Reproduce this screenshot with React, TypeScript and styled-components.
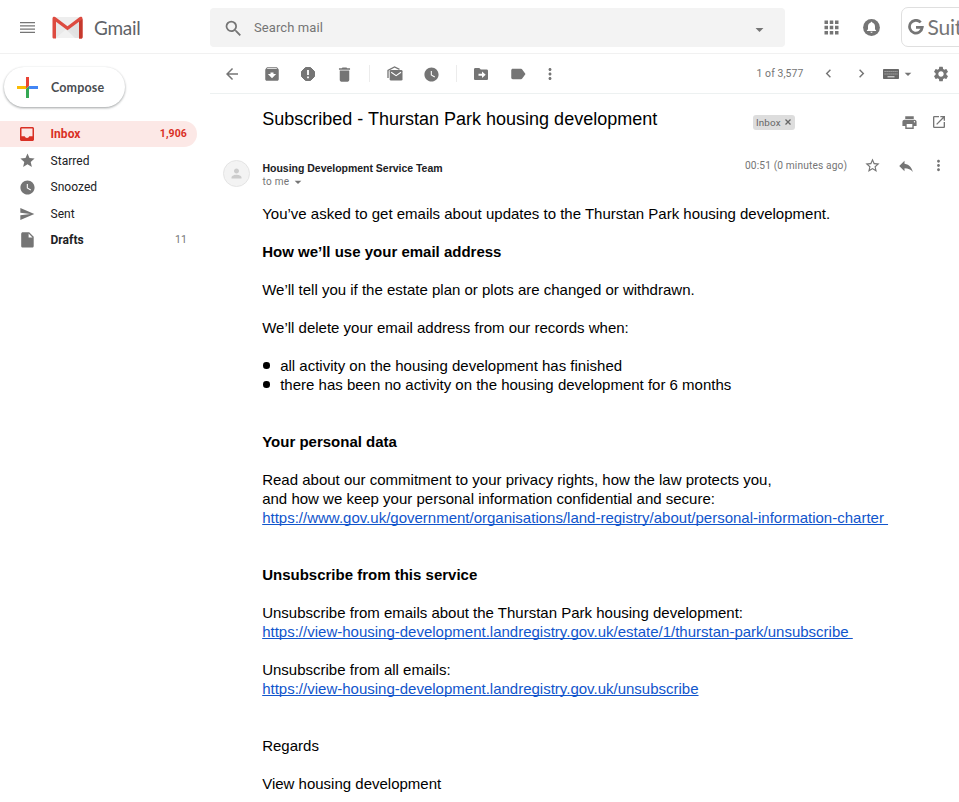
import React from 'react';
import styled, { createGlobalStyle } from 'styled-components';
import {
  MdArrowBack, MdArchive, MdDelete, MdWatchLater, MdLabel, MdMoreVert, MdChevronLeft, MdChevronRight,
  MdArrowDropDown, MdSettings, MdPrint, MdOpenInNew, MdStarBorder, MdReply, MdPerson, MdStar, MdSend,
  MdApps, MdSearch,
} from 'react-icons/md';

const grey = '#757575';
const red = '#d93025';

const GlobalStyle = createGlobalStyle`
  * { box-sizing: border-box; }
  html, body { margin: 0; padding: 0; background: #fff; overflow: hidden; }
  svg { display: block; flex: none; }
`;

const Page = styled.div`
  width: 959px;
  height: 802px;
  overflow: hidden;
  display: flex;
  flex-direction: column;
  background: #fff;
  color: ${grey};
  font-family: Roboto, "Liberation Sans", sans-serif;
`;

const Header = styled.header`
  display: flex;
  height: 54px;
  flex: none;
  align-items: center;
  border-bottom: 1px solid #f1f1f1;
`;

const Brand = styled.div`
  width: 210px;
  flex: none;
  display: flex;
  align-items: center;
  padding: 2px 0 0 20px;
`;

const BrandName = styled.span`
  font: 400 19px/24px Lato, sans-serif;
  letter-spacing: -0.3px;
  color: #5f6368;
  margin-left: 11px;
`;

const MenuIcon = styled.svg`
  margin-right: 17px;
`;

const SearchBox = styled.div`
  width: 574.5px;
  height: 39px;
  flex: none;
  display: flex;
  align-items: center;
  margin-top: 2px;
  padding: 1px 15px 0 13px;
  border-radius: 4px;
  background: #f3f3f3;
`;

const SearchText = styled.span`
  flex: 1;
  margin-left: 10px;
  font-size: 13px;
  line-height: 18px;
  letter-spacing: 0.1px;
`;

const Slot = styled.span<{ $w: number; $dy?: number }>`
  width: ${(p) => p.$w}px;
  flex: none;
  display: flex;
  align-items: center;
  justify-content: center;
  padding-top: ${(p) => p.$dy ?? 0}px;
`;

const HeaderTools = styled.div`
  display: flex;
  align-items: center;
  padding: 1px 0 0 26.5px;
`;

const SuiteBadge = styled.div`
  width: 130px;
  height: 40px;
  flex: none;
  display: flex;
  align-items: center;
  margin-left: 10px;
  padding-left: 6px;
  border: 1px solid #dfdfdf;
  border-radius: 7px;
  font: 400 21px/24px Lato, sans-serif;
  color: #757575;
`;

const SuiteName = styled.span`
  margin-left: 3.5px;
  letter-spacing: -0.2px;
`;

const Body = styled.div`
  display: flex;
  flex: 1;
  min-height: 0;
`;

const Sidebar = styled.nav`
  width: 210px;
  flex: none;
  display: flex;
  flex-direction: column;
  align-items: flex-start;
  padding-top: 13px;
`;

const ComposeButton = styled.div`
  width: 121px;
  height: 40px;
  display: flex;
  align-items: center;
  margin: 0 0 13.8px 4px;
  padding: 1px 0 0 13px;
  border-radius: 20px;
  background: #fff;
  box-shadow: 0 1px 2px rgba(60, 64, 67, 0.32), 0 1px 2px 1px rgba(60, 64, 67, 0.12);
  color: #4a4d51;
  font: 700 12.5px/18px Lato, sans-serif;
`;

const ComposeLabel = styled.span`
  margin-left: 13px;
  letter-spacing: 0.15px;
`;

const Folder = styled.div<{ $tone: 'active' | 'plain' | 'strong' }>`
  width: 197px;
  height: 26.5px;
  display: flex;
  align-items: center;
  padding: 0 10px 0 16.5px;
  border-radius: 0 13px 13px 0;
  background: ${(p) => (p.$tone === 'active' ? '#fce8e6' : 'transparent')};
  color: ${(p) => (p.$tone === 'active' ? red : '#202124')};
  font-size: 12px;
  line-height: 16px;
  font-weight: ${(p) => (p.$tone === 'plain' ? 400 : 700)};
`;

const FolderIcon = styled.span<{ $color: string }>`
  display: flex;
  width: 21px;
  justify-content: center;
  color: ${(p) => p.$color};
`;

const FolderName = styled.span`
  flex: 1;
  margin-left: 13px;
  letter-spacing: 0.05px;
`;

const FolderCount = styled.span<{ $muted: boolean }>`
  font-size: 10.5px;
  letter-spacing: 0.1px;
  font-weight: ${(p) => (p.$muted ? 400 : 700)};
  color: ${(p) => (p.$muted ? grey : red)};
`;

const Main = styled.main`
  width: 749px;
  flex: none;
  display: flex;
  flex-direction: column;
`;

const Toolbar = styled.div`
  height: 40px;
  flex: none;
  display: flex;
  align-items: center;
  padding-left: 3.75px;
  border-bottom: 1px solid #edf1f1;
`;

const ToolDivider = styled.span`
  width: 1px;
  height: 17px;
  margin: 0 6.25px;
  background: #ececec;
`;

const ToolGap = styled.span`
  width: 3px;
`;

const Pager = styled.div`
  display: flex;
  align-items: center;
  margin-left: auto;
  height: 40px;
`;

const PageCount = styled.span`
  font-size: 10.4px;
  letter-spacing: 0.1px;
  width: 55px;
  white-space: nowrap;
`;

const SubjectRow = styled.div`
  height: 56px;
  flex: none;
  display: flex;
  align-items: center;
  padding-left: 52.3px;
`;

const Subject = styled.h1`
  width: 490.7px;
  margin: 0;
  padding-bottom: 6px;
  font: 400 18px/24px "Liberation Sans", Arial, sans-serif;
  color: #000;
  white-space: nowrap;
`;

const InboxTag = styled.span`
  width: 42px;
  height: 15px;
  display: flex;
  align-items: center;
  gap: 4px;
  padding-left: 3px;
  border-radius: 3px;
  background: #ddd;
  color: #666;
  font-size: 9.8px;
  letter-spacing: 0.15px;
`;

const SubjectTools = styled.div`
  display: flex;
  margin-left: 99.3px;
`;

const SenderRow = styled.div`
  height: 54px;
  flex: none;
  display: flex;
  padding: 10px 0 0 13px;
`;

const Avatar = styled.div`
  width: 27px;
  height: 27px;
  flex: none;
  display: flex;
  align-items: center;
  justify-content: center;
  border: 1px solid #e4e4e4;
  border-radius: 50%;
  background: #f3f3f3;
  color: #ccc;
`;

const SenderInfo = styled.div`
  width: 495px;
  flex: none;
  padding: 1px 0 0 12.5px;
`;

const SenderName = styled.div`
  font: 700 10.5px/14px "Liberation Sans", Arial, sans-serif;
  letter-spacing: -0.02px;
  color: #202124;
`;

const Recipient = styled.div`
  display: flex;
  align-items: center;
  height: 13px;
  font-size: 10px;
  letter-spacing: 0.3px;
`;

const SentAt = styled.span`
  width: 111px;
  flex: none;
  height: 12px;
  font-size: 10.2px;
  line-height: 12px;
  letter-spacing: 0.13px;
  white-space: nowrap;
`;

const MessageTools = styled.div`
  display: flex;
  height: 11px;
  align-items: center;
`;

const Message = styled.article`
  padding-left: 52.2px;
  font: 400 15px/19px "Liberation Sans", Arial, sans-serif;
  color: #000;
`;

const Paragraph = styled.p<{ $gap?: number }>`
  margin: 0 0 ${(p) => p.$gap ?? 19}px;
  white-space: pre;
`;

const Heading = styled.h2`
  margin: 0 0 19px;
  font: 700 15px/19px "Liberation Sans", Arial, sans-serif;
`;

const BulletList = styled.ul`
  margin: 0 0 38px;
  padding: 0;
  list-style: none;
`;

const Bullet = styled.li`
  display: flex;
  align-items: center;
  height: 19px;

  &::before {
    content: '';
    width: 6.5px;
    height: 6.5px;
    margin: 0 10.5px 0 1px;
    border-radius: 50%;
    background: #000;
  }
`;

const Link = styled.a`
  color: #1155cc;
  text-decoration: underline;
  text-decoration-thickness: 1px;
  text-decoration-skip-ink: none;
  text-underline-offset: 1px;
`;

const GmailLogo = () => (
  <svg width="31" height="24" viewBox="0 0 31 24">
    <path d="M2 1h27v21H2z" fill="#e9e9e9" />
    <path d="M4 22 15.5 12 27 22z" fill="#f1f1f1" />
    <path d="M4 4 23 22h4V5z" fill="#dcdcdc" opacity=".6" />
    <path d="M3 1h25L15.5 10.5z" fill="#eee" />
    <path d="M.5 2.5C.5 1.2 1.4.8 2.3.8c.7 0 1.1.2 1.6.6l11.6 8.8L27.1 1.4c.5-.4.9-.6 1.6-.6.9 0 1.8.4 1.8 1.7V21c0 1-.6 1.6-1.5 1.6h-2V5.7l-11.5 8.6L4 5.7v16.9H2C1.1 22.6.5 22 .5 21z" fill="#dd4b40" />
    <path d="M27 5.7 30.5 3v18c0 1-.6 1.6-1.5 1.6h-2z" fill="#c5392d" />
  </svg>
);

const ComposePlus = () => (
  <svg width="21" height="21" viewBox="0 0 21 21">
    <path d="M9 0h3v9l-3 3z" fill="#ea4335" />
    <path d="M0 9h9v3H0z" fill="#fbbc05" />
    <path d="M9 12l3-3v12H9z" fill="#34a853" />
    <path d="M12 9h9v3h-9z" fill="#4285f4" />
  </svg>
);

const ReportIcon = () => (
  <svg width="14" height="14" viewBox="0 0 14 14">
    <path d="M4.5.5h5L13.5 4.5v5L9.5 13.5h-5L.5 9.5v-5z" fill={grey} stroke={grey} strokeLinejoin="round" />
    <path d="M6.1 3h1.8v5H6.1zM6.1 9.5h1.8v1.7H6.1z" fill="#fff" />
  </svg>
);

const MarkUnreadIcon = () => (
  <svg width="16" height="15" viewBox="0 0 16 15">
    <path d="M1 12V4.3L7.5 1l5 2.3" fill="none" stroke={grey} strokeWidth="1.3" />
    <rect x="2.7" y="4" width="12.8" height="10.5" rx="1.3" fill={grey} />
    <path d="M4.2 6.3l4.9 3.4L14 6.3" fill="none" stroke="#fff" strokeWidth="1.1" />
  </svg>
);

const MoveIcon = () => (
  <svg width="14" height="12" viewBox="0 0 14 12">
    <path d="M1.3 0h4l1.5 1.5h5.9c.7 0 1.3.6 1.3 1.3v7.9c0 .7-.6 1.3-1.3 1.3H1.3C.6 12 0 11.4 0 10.7V1.3C0 .6.6 0 1.3 0z" fill={grey} />
    <path d="M4.5 5.7H8V3.5l3.7 3.2L8 9.9V7.7H4.5z" fill="#fff" />
  </svg>
);

const BellIcon = () => (
  <svg width="17" height="17" viewBox="0 0 17 17">
    <circle cx="8.5" cy="8.5" r="8.4" fill={grey} />
    <path d="M8.5 2.8c.6 0 .9.4.9.9 1.7.5 2.6 1.9 2.6 3.7v2.9l1.1 1.1v.6H3.9v-.6L5 10.3V7.4c0-1.8.9-3.2 2.6-3.7 0-.5.3-.9.9-.9zM7.4 12.8h2.2c0 1.4-2.2 1.4-2.2 0z" fill="#fff" />
  </svg>
);

const KeyboardIcon = () => (
  <svg width="16" height="10" viewBox="0 0 16 10">
    <rect width="16" height="10" rx=".8" fill="#686868" />
    <path d="M1.5 2.5h13M1.5 5h13" stroke="#b4b4b4" strokeWidth="1" strokeDasharray="1.2 .8" />
    <path d="M4.5 7.8h7" stroke="#eee" strokeWidth="1" />
  </svg>
);

const InboxIcon = () => (
  <svg width="14" height="14" viewBox="0 0 14 14">
    <path fillRule="evenodd" d="M1.5 0h11c.8 0 1.5.7 1.5 1.5v11c0 .8-.7 1.5-1.5 1.5h-11C.7 14 0 13.3 0 12.5v-11C0 .7.7 0 1.5 0zm0 1.5v7.8h3.2a2.4 2.4 0 0 0 4.6 0h3.2V1.5z" fill={red} />
  </svg>
);

const DraftIcon = () => (
  <svg width="13" height="16" viewBox="0 0 13 16">
    <path d="M1.8.3h6.4l4.5 4.5v9.1c0 .9-.7 1.6-1.6 1.6H1.8c-.9 0-1.6-.7-1.6-1.6v-12C.2 1 .9.3 1.8.3z" fill={grey} />
    <path d="M7.6 1.5v3.9h3.9z" fill="#fff" />
  </svg>
);

const folders = [
  { name: 'Inbox', count: '1,906', tone: 'active' as const, icon: <InboxIcon /> },
  { name: 'Starred', tone: 'plain' as const, icon: <MdStar size={17} /> },
  { name: 'Snoozed', tone: 'plain' as const, icon: <MdWatchLater size={17} /> },
  { name: 'Sent', tone: 'plain' as const, icon: <MdSend size={16} /> },
  { name: 'Drafts', count: '11', tone: 'strong' as const, icon: <DraftIcon /> },
];

export default function App() {
  return (
    <Page>
      <GlobalStyle />
      <Header>
        <Brand>
          <MenuIcon width="15" height="11" viewBox="0 0 15 11">
            <path d="M0 .7h15M0 3.9h15M0 7.1h15M0 10.3h15" stroke={grey} strokeWidth="1.3" />
          </MenuIcon>
          <GmailLogo />
          <BrandName>Gmail</BrandName>
        </Brand>
        <SearchBox>
          <MdSearch size={21} />
          <SearchText>Search mail</SearchText>
          <Slot $w={20} $dy={3}><MdArrowDropDown size={19} /></Slot>
        </SearchBox>
        <HeaderTools>
          <Slot $w={40} $dy={1}><MdApps size={21} /></Slot>
          <Slot $w={40} $dy={1}><BellIcon /></Slot>
          <SuiteBadge>
            <svg width="16" height="16" viewBox="0 0 16 16">
              <path d="M12.7 3.4A6.4 6.4 0 1 0 14.3 8.4H8" fill="none" stroke={grey} strokeWidth="2.7" />
            </svg>
            <SuiteName>Suite</SuiteName>
          </SuiteBadge>
        </HeaderTools>
      </Header>
      <Body>
        <Sidebar>
          <ComposeButton>
            <ComposePlus />
            <ComposeLabel>Compose</ComposeLabel>
          </ComposeButton>
          {folders.map((f) => (
            <Folder key={f.name} $tone={f.tone}>
              <FolderIcon $color={f.tone === 'active' ? red : grey}>{f.icon}</FolderIcon>
              <FolderName>{f.name}</FolderName>
              {f.count && <FolderCount $muted={f.tone !== 'active'}>{f.count}</FolderCount>}
            </Folder>
          ))}
        </Sidebar>
        <Main>
          <Toolbar>
            <Slot $w={36.5} $dy={1}><MdArrowBack size={18} /></Slot>
            <ToolGap />
            <Slot $w={36.5} $dy={1}><MdArchive size={18} /></Slot>
            <Slot $w={36.5} $dy={1}><ReportIcon /></Slot>
            <Slot $w={36.5} $dy={1}><MdDelete size={19} /></Slot>
            <ToolDivider />
            <Slot $w={36.5}><MarkUnreadIcon /></Slot>
            <Slot $w={36.5} $dy={1}><MdWatchLater size={17} /></Slot>
            <ToolDivider />
            <Slot $w={36.5} $dy={1}><MoveIcon /></Slot>
            <Slot $w={36.5} $dy={1}><MdLabel size={18} /></Slot>
            <Slot $w={28.5} $dy={1}><MdMoreVert size={18} /></Slot>
            <Pager>
              <PageCount>1 of 3,577</PageCount>
              <Slot $w={33}><MdChevronLeft size={17} /></Slot>
              <Slot $w={33}><MdChevronRight size={17} /></Slot>
              <Slot $w={27}><KeyboardIcon /></Slot>
              <Slot $w={6}><MdArrowDropDown size={16} /></Slot>
              <Slot $w={12.5} />
              <ToolGap />
              <Slot $w={30}><MdSettings size={18} /></Slot>
              <ToolGap />
            </Pager>
          </Toolbar>
          <SubjectRow>
            <Subject>Subscribed - Thurstan Park housing development</Subject>
            <InboxTag>
              Inbox
              <svg width="6" height="6" viewBox="0 0 6 6">
                <path d="M.5.5l5 5M5.5.5l-5 5" stroke="#666" strokeWidth="1.3" />
              </svg>
            </InboxTag>
            <SubjectTools>
              <Slot $w={30}><MdPrint size={17} /></Slot>
              <Slot $w={30}><MdOpenInNew size={16} /></Slot>
            </SubjectTools>
          </SubjectRow>
          <SenderRow>
            <Avatar><MdPerson size={15} /></Avatar>
            <SenderInfo>
              <SenderName>Housing Development Service Team</SenderName>
              <Recipient>to me <Slot $w={17}><MdArrowDropDown size={16} /></Slot></Recipient>
            </SenderInfo>
            <SentAt>00:51 (0 minutes ago)</SentAt>
            <MessageTools>
              <Slot $w={33}><MdStarBorder size={17} /></Slot>
              <Slot $w={33}><MdReply size={18} /></Slot>
              <Slot $w={33}><MdMoreVert size={17} /></Slot>
            </MessageTools>
          </SenderRow>
          <Message>
            <Paragraph>You’ve asked to get emails about updates to the Thurstan Park housing development.</Paragraph>
            <Heading>How we’ll use your email address</Heading>
            <Paragraph>We’ll tell you if the estate plan or plots are changed or withdrawn.</Paragraph>
            <Paragraph>We’ll delete your email address from our records when:</Paragraph>
            <BulletList>
              <Bullet>all activity on the housing development has finished</Bullet>
              <Bullet>there has been no activity on the housing development for 6 months</Bullet>
            </BulletList>
            <Heading>Your personal data</Heading>
            <Paragraph $gap={38}>
              Read about our commitment to your privacy rights, how the law protects you,<br />
              and how we keep your personal information confidential and secure:<br />
              <Link>{'https://www.gov.uk/government/organisations/land-registry/about/personal-information-charter '}</Link>
            </Paragraph>
            <Heading>Unsubscribe from this service</Heading>
            <Paragraph>
              Unsubscribe from emails about the Thurstan Park housing development:<br />
              <Link>{'https://view-housing-development.landregistry.gov.uk/estate/1/thurstan-park/unsubscribe '}</Link>
            </Paragraph>
            <Paragraph $gap={38}>
              Unsubscribe from all emails:<br />
              <Link>https://view-housing-development.landregistry.gov.uk/unsubscribe</Link>
            </Paragraph>
            <Paragraph>Regards</Paragraph>
            <Paragraph>View housing development</Paragraph>
          </Message>
        </Main>
      </Body>
    </Page>
  );
}
